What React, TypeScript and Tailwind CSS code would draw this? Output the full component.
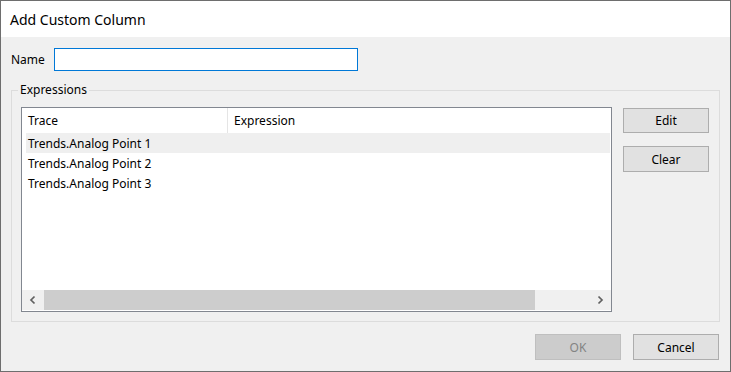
import React from "react";

const font = { fontFamily: '"Noto Sans", "Open Sans", sans-serif' };

function Chevron({ dir }: { dir: "left" | "right" }) {
  return (
    <svg width="8" height="10" viewBox="0 0 8 10">
      {dir === "left" ? (
        <polyline points="5.5,1.5 2,5 5.5,8.5" fill="none" stroke="#606060" strokeWidth="1.7" />
      ) : (
        <polyline points="2.5,1.5 6,5 2.5,8.5" fill="none" stroke="#606060" strokeWidth="1.7" />
      )}
    </svg>
  );
}

export default function App() {
  const rows = ["Trends.Analog Point 1", "Trends.Analog Point 2", "Trends.Analog Point 3"];
  return (
    <div
      className="w-[731px] h-[372px] border border-[#6e6e6e] flex flex-col bg-[#f0f0f0] text-black"
      style={font}
    >
      <div className="h-[36px] bg-white flex items-center pl-[9px] text-[14px] shrink-0">
        Add Custom Column
      </div>
      <div className="flex-1 flex flex-col text-[12px]">
        <div className="flex items-center mt-[11px] h-[23px]">
          <span className="ml-[10px] w-[43px] pt-[1px]">Name</span>
          <input
            className="w-[304px] h-[23px] border border-[#0078d7] bg-white outline-none px-1"
            defaultValue=""
          />
        </div>
        <fieldset className="mx-[10px] mt-[11px] h-[240px] border border-[#dcdcdc] flex">
          <legend className="ml-[6px] px-[2px] leading-[16px]">Expressions</legend>
          <div className="flex mx-[9px] mt-[9px]">
            <div className="w-[591px] h-[205px] border border-[#828790] bg-white flex flex-col">
              <div className="h-[25px] flex shrink-0">
                <div className="w-[206px] border-r border-[#e5e5e5] pl-[6px] pt-[1px] flex items-center">Trace</div>
                <div className="flex-1 pl-[6px] pt-[1px] flex items-center">Expression</div>
              </div>
              <div className="flex-1 flex flex-col pl-[4px] pr-[1px]">
                {rows.map((r, i) => (
                  <div
                    key={r}
                    className={`h-[20px] flex items-center pl-[2px] pt-[1px] ${i === 0 ? "bg-[#efefef]" : ""}`}
                  >
                    {r}
                  </div>
                ))}
              </div>
              <div className="h-[20px] flex shrink-0 bg-[#f0f0f0] mb-[1px]">
                <div className="w-[22px] flex items-center justify-center">
                  <Chevron dir="left" />
                </div>
                <div className="w-[491px] bg-[#cdcdcd]" />
                <div className="flex-1 flex items-center justify-end pr-[7px]">
                  <Chevron dir="right" />
                </div>
              </div>
            </div>
            <div className="flex flex-col ml-[11px] mt-[1px] gap-[13px]">
              <button className="w-[86px] h-[25px] bg-[#e1e1e1] border border-[#adadad] pt-[1px]">Edit</button>
              <button className="w-[86px] h-[26px] bg-[#e1e1e1] border border-[#adadad] pt-[1px]">Clear</button>
            </div>
          </div>
        </fieldset>
        <div className="flex justify-end gap-[12px] mt-[12px] mr-[11px]">
          <button className="w-[86px] h-[26px] bg-[#cccccc] border border-[#bfbfbf] text-[#838383] pt-[1px]">OK</button>
          <button className="w-[86px] h-[26px] bg-[#e1e1e1] border border-[#adadad] pt-[1px]">Cancel</button>
        </div>
      </div>
    </div>
  );
}
